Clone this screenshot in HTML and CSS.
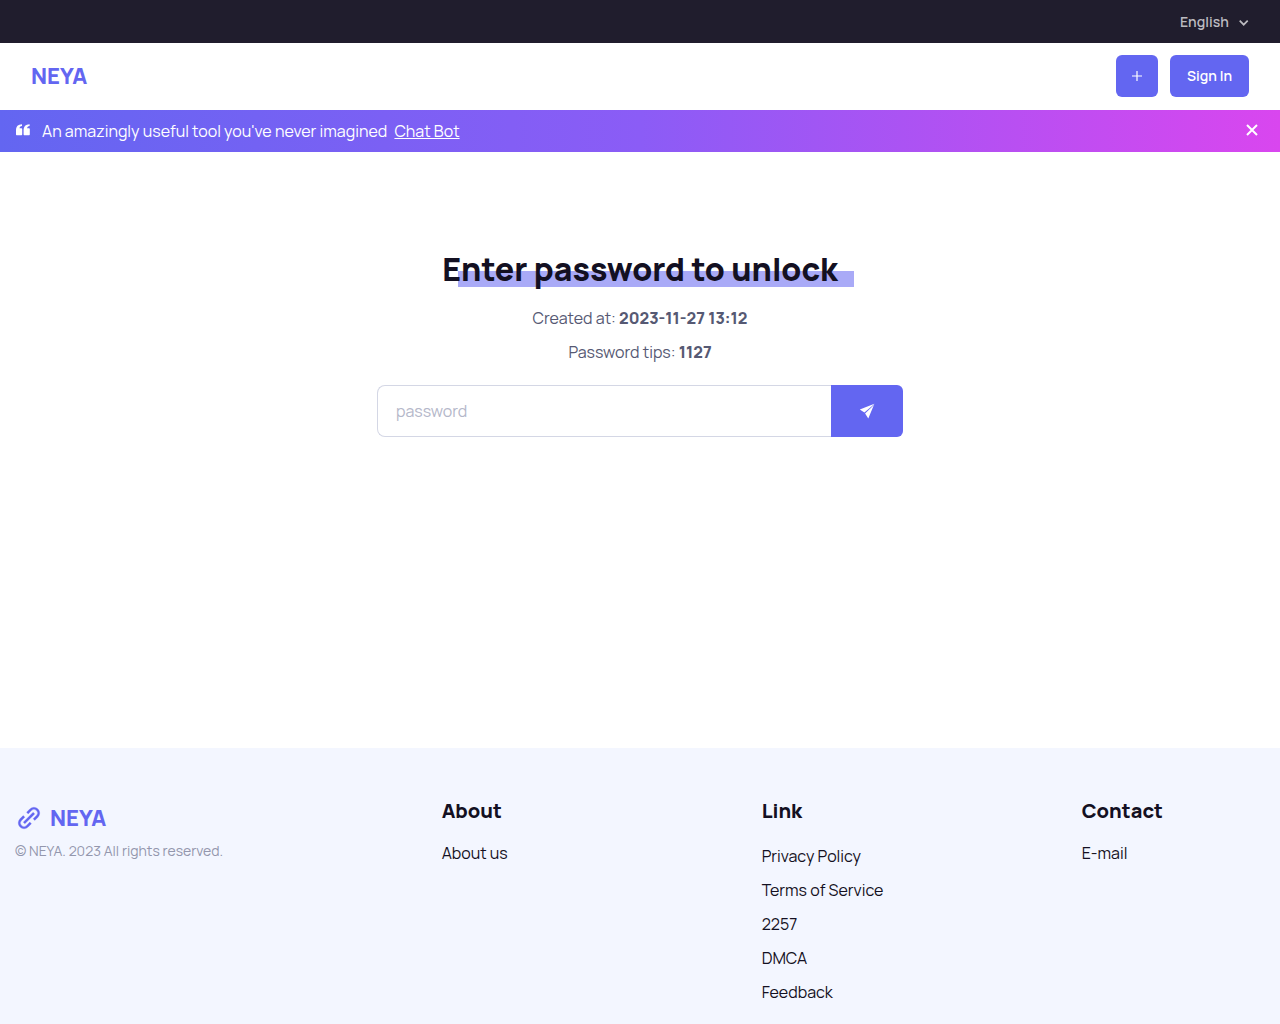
FILE: index.html
```html
<!DOCTYPE html>
<html lang="en">
<head>
    <meta charset="UTF-8">
    <meta name="viewport" content="width=device-width, initial-scale=1.0">
    <title>NEYA</title>
    <link rel="stylesheet" href="styles.css">
</head>
<body>
    <div class="topbar">
        <label class="language">
            <select aria-label="Language">
                <option>English</option>
            </select>
            <svg width="10" height="8" viewBox="0 0 10 8" fill="none" stroke="currentColor" stroke-width="1.7" aria-hidden="true">
                <path d="M.7 2.700l4 4 4-4"/>
            </svg>
        </label>
    </div>

    <header class="navbar">
        <a class="brand" href="#">NEYA</a>
        <div class="nav-actions">
            <button class="btn btn-icon" type="button" aria-label="Create">
                <svg width="10" height="10" viewBox="0 0 10 10" fill="none" stroke="currentColor" stroke-width="1.2" stroke-linecap="round" aria-hidden="true">
                    <path d="M5 .3v9.4M.3 5h9.4"/>
                </svg>
            </button>
            <a class="btn" href="#">Sign In</a>
        </div>
    </header>

    <div class="notice">
        <svg width="14" height="14" viewBox="0 0 14 14" fill="currentColor" aria-hidden="true">
            <path d="M6 .2v1.900c-1.700.2-2.400 1-2.500 2.200h1.700c.6 0 1 .4 1 1v5c0 .6-.4 1-1 1H1c-.6 0-1-.4-1-1V6C0 2.400 2 .4 6 .2z"/>
            <path d="M13.600 .2v1.900c-1.700.2-2.400 1-2.500 2.200h1.700c.6 0 1 .4 1 1v5c0 .6-.4 1-1 1H8.600c-.6 0-1-.4-1-1V6c0-3.600 2-5.600 6-5.800z"/>
        </svg>
        <p>An amazingly useful tool you've never imagined <a href="#">Chat Bot</a></p>
        <button class="notice-close" type="button" aria-label="Close">
            <svg width="12" height="14" viewBox="0 0 12 14" fill="none" stroke="currentColor" stroke-width="2" aria-hidden="true">
                <path d="M1 1l10 10M11 1L1 11"/>
            </svg>
        </button>
    </div>

    <main class="unlock">
        <h1>Enter password to unlock</h1>
        <p>Created at: <strong>2023-11-27 13:12</strong></p>
        <p>Password tips: <strong>1127</strong></p>
        <form class="unlock-form">
            <input type="password" placeholder="password" aria-label="Password">
            <button type="submit" aria-label="Unlock">
                <svg width="16" height="16" viewBox="0 0 16 16" fill="currentColor" aria-hidden="true">
                    <path d="M15.400 .8L.8 6.600l4.600 3 8-6.900z"/>
                    <path d="M15.400 .8L9.300 15.400 6.100 10.400 13.900 3z"/>
                </svg>
            </button>
        </form>
    </main>

    <footer class="footer">
        <div>
            <a class="brand footer-brand" href="#">
                <svg width="28" height="28" viewBox="0 0 24 24" fill="currentColor" stroke="currentColor" stroke-width=".2" aria-hidden="true">
                    <path d="M8.464 16.950l-1.415-1.414 8.487-8.486 1.414 1.415z"/>
                    <path d="M4.222 19.778a5 5 0 0 0 7.071 0l2.828-2.829-1.414-1.414-2.828 2.829a3 3 0 0 1-4.243-4.243l2.829-2.828-1.414-1.414-2.829 2.828a5 5 0 0 0 0 7.071z"/>
                    <path d="M19.778 11.293a5 5 0 0 0-7.071-7.071L9.879 7.051l1.414 1.414 2.828-2.829a3 3 0 0 1 4.243 4.243l-2.829 2.828 1.414 1.415z"/>
                </svg>
                NEYA
            </a>
            <p class="copyright">© NEYA. 2023 All rights reserved.</p>
        </div>
        <div>
            <h2>About</h2>
            <a href="#">About us</a>
        </div>
        <div>
            <h2>Link</h2>
            <ul>
                <li><a href="#">Privacy Policy</a></li>
                <li><a href="#">Terms of Service</a></li>
                <li><a href="#">2257</a></li>
                <li><a href="#">DMCA</a></li>
                <li><a href="#">Feedback</a></li>
            </ul>
        </div>
        <div>
            <h2>Contact</h2>
            <a href="#">E-mail</a>
        </div>
    </footer>
</body>
</html>
```
FILE: styles.css
```css
:root {
    --primary: #6366f1;
    --dark: #131022;
    --text: #565973;
    --muted: #9397ad;
    --border: #d4d7e5;
}

* {
    box-sizing: border-box;
}

body {
    display: flex;
    flex-direction: column;
    min-height: 100vh;
    margin: 0;
    font-family: Manrope, Inter, sans-serif;
    font-size: 16px;
    line-height: 26px;
    color: var(--text);
    background: #fff;
}

h1,
h2,
p,
ul {
    margin: 0;
    padding: 0;
}

h1,
h2,
strong {
    font-weight: 800;
}

a {
    color: var(--dark);
    text-decoration: none;
}

button,
input,
select {
    font: inherit;
}

svg {
    display: block;
}

/* Top bar */
.topbar {
    display: flex;
    justify-content: flex-end;
    align-items: center;
    height: 43px;
    padding: 0 31px;
    background: #201d2d;
}

.language {
    display: flex;
    align-items: center;
    gap: 10px;
    color: #bcbbc0;
}

.language select {
    appearance: none;
    padding: 0;
    border: 0;
    background: none;
    color: inherit;
    font-size: 14px;
    font-weight: 600;
}

/* Navigation */
.navbar {
    display: flex;
    justify-content: space-between;
    align-items: center;
    padding: 12px 31px 13px;
}

.brand {
    color: var(--primary);
    font-size: 22px;
    font-weight: 800;
}

.nav-actions {
    display: flex;
    gap: 12px;
}

.btn {
    display: flex;
    justify-content: center;
    align-items: center;
    height: 42px;
    padding: 0 17px;
    border: 0;
    border-radius: 6px;
    background: var(--primary);
    color: #fff;
    font-size: 14px;
    font-weight: 600;
    cursor: pointer;
}

.btn-icon {
    width: 42px;
    padding: 0;
}

/* Notice */
.notice {
    display: flex;
    align-items: center;
    gap: 12px;
    height: 42px;
    padding: 0 16px;
    background: linear-gradient(90deg, #6366f1 0%, #8b5cf6 50%, #d946ef 100%);
    color: #fff;
}

.notice a {
    margin-left: 4px;
    color: #fff;
    text-decoration: underline;
}

.notice-close {
    margin-left: auto;
    padding: 6px;
    border: 0;
    background: none;
    color: #fff;
    cursor: pointer;
}

/* Unlock form */
.unlock {
    display: flex;
    flex: 1;
    flex-direction: column;
    align-items: center;
    gap: 8px;
    padding: 97px 16px;
}

.unlock h1 {
    position: relative;
    margin-bottom: 8px;
    color: var(--dark);
    font-size: 32px;
    line-height: 40px;
}

/* Offset marker stroke behind the heading */
.unlock h1::before {
    content: "";
    position: absolute;
    z-index: -1;
    top: 22px;
    left: 16px;
    width: 100%;
    height: 16px;
    background: #a9aaf7;
}

.unlock-form {
    display: flex;
    width: 100%;
    max-width: 526px;
    margin-top: 12px;
}

.unlock-form input {
    flex: 1;
    min-width: 0;
    height: 52px;
    padding: 0 18px;
    border: 1px solid var(--border);
    border-right: 0;
    border-radius: 8px 0 0 8px;
    color: var(--text);
}

.unlock-form input::placeholder {
    color: #b4b7c9;
}

.unlock-form button {
    display: flex;
    justify-content: center;
    align-items: center;
    width: 72px;
    border: 0;
    border-radius: 0 6px 6px 0;
    background: var(--primary);
    color: #fff;
    cursor: pointer;
}

/* Footer */
.footer {
    display: grid;
    grid-template-columns: 4fr 3fr 3fr 2fr;
    padding: 50px 0 19px;
    background: #f3f6ff;
}

.footer > div {
    padding: 0 15px;
}

.footer h2 {
    margin-bottom: 16px;
    color: var(--dark);
    font-size: 20px;
}

.footer ul {
    display: flex;
    flex-direction: column;
    gap: 8px;
    padding-top: 3px;
    list-style: none;
}

.footer-brand {
    display: flex;
    align-items: center;
    gap: 7px;
    padding: 6px 0;
}

.copyright {
    color: var(--muted);
    font-size: 14px;
}
```
